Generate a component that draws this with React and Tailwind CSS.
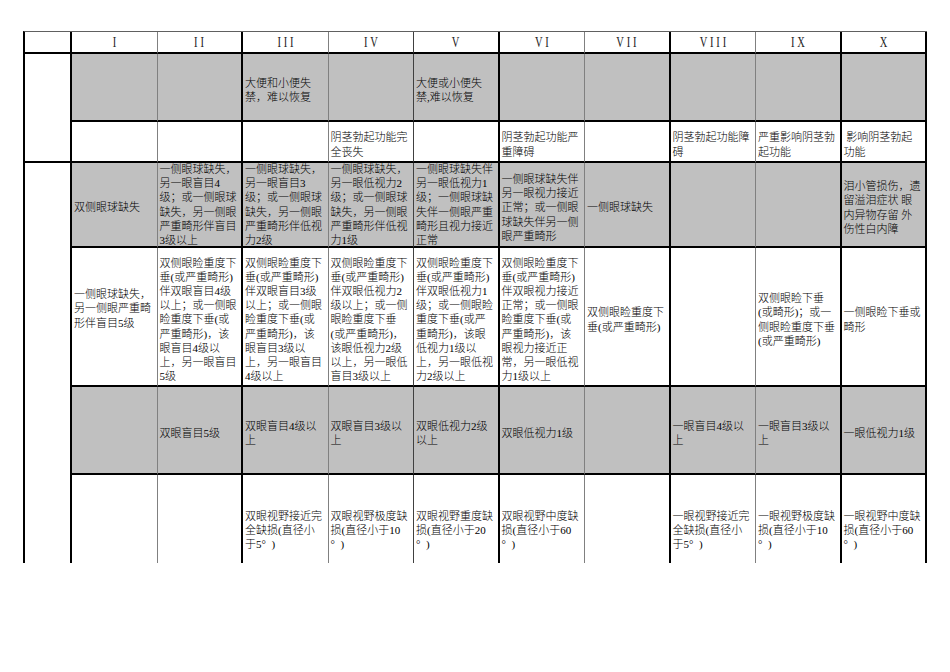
import React from "react";

const colBorder = [
  "border-r-2 border-r-black",
  "border-r border-r-[#808080]",
  "border-r-2 border-r-black",
  "border-r border-r-[#808080]",
  "border-r border-r-[#404040]",
  "border-r-2 border-r-black",
  "border-r border-r-[#808080]",
  "border-r-2 border-r-black",
  "border-r border-r-[#808080]",
  "border-r-2 border-r-black",
  "border-r-2 border-r-black",
];

const headers = ["I", "II", "III", "IV", "V", "VI", "VII", "VIII", "IX", "X"];

const deg = "°\u00a0\u00a0)";

const rows = [
  {
    gray: true,
    cells: [
      null,
      null,
      ["大便和小便失", "禁，难以恢复"],
      null,
      ["大便或小便失", "禁,难以恢复"],
      null,
      null,
      null,
      null,
      null,
    ],
  },
  {
    gray: false,
    cells: [
      null,
      null,
      null,
      ["阴茎勃起功能完", "全丧失"],
      null,
      ["阴茎勃起功能严", "重障碍"],
      null,
      ["阴茎勃起功能障", "碍"],
      ["严重影响阴茎勃", "起功能"],
      ["\u00a0影响阴茎勃起", "功能"],
    ],
  },
  {
    gray: true,
    cells: [
      ["双侧眼球缺失"],
      ["一侧眼球缺失，", "另一眼盲目4", "级；或一侧眼球", "缺失，另一侧眼", "严重畸形伴盲目", "3级以上"],
      ["一侧眼球缺失，", "另一眼盲目3", "级；或一侧眼球", "缺失，另一侧眼", "严重畸形伴低视", "力2级"],
      ["一侧眼球缺失，", "另一眼低视力2", "级；或一侧眼球", "缺失，另一侧眼", "严重畸形伴低视", "力1级"],
      ["一侧眼球缺失伴", "另一眼低视力1", "级；一侧眼球缺", "失伴一侧眼严重", "畸形且视力接近", "正常"],
      ["一侧眼球缺失伴", "另一眼视力接近", "正常；或一侧眼", "球缺失伴另一侧", "眼严重畸形"],
      ["一侧眼球缺失"],
      null,
      null,
      ["泪小管损伤，遗", "留溢泪症状 眼", "内异物存留 外", "伤性白内障"],
    ],
  },
  {
    gray: false,
    cells: [
      ["一侧眼球缺失，", "另一侧眼严重畸", "形伴盲目5级"],
      ["双侧眼睑重度下", "垂(或严重畸形)", "伴双眼盲目4级", "以上；或一侧眼", "睑重度下垂(或", "严重畸形)，该", "眼盲目4级以", "上，另一眼盲目", "5级"],
      ["双侧眼睑重度下", "垂(或严重畸形)", "伴双眼盲目3级", "以上；或一侧眼", "睑重度下垂(或", "严重畸形)，该", "眼盲目3级以", "上，另一眼盲目", "4级以上"],
      ["双侧眼睑重度下", "垂(或严重畸形)", "伴双眼低视力2", "级以上；或一侧", "眼睑重度下垂", "(或严重畸形)，", "该眼低视力2级", "以上，另一眼低", "盲目3级以上"],
      ["双侧眼睑重度下", "垂(或严重畸形)", "伴双眼低视力1", "级；或一侧眼睑", "重度下垂(或严", "重畸形)，该眼", "低视力1级以", "上，另一眼低视", "力2级以上"],
      ["双侧眼睑重度下", "垂(或严重畸形)", "伴双眼视力接近", "正常；或一侧眼", "睑重度下垂(或", "严重畸形)，该", "眼视力接近正", "常，另一眼低视", "力1级以上"],
      ["双侧眼睑重度下", "垂(或严重畸形)"],
      null,
      ["双侧眼睑下垂", "(或畸形)；或一", "侧眼睑重度下垂", "(或严重畸形)"],
      ["一侧眼睑下垂或", "畸形"],
    ],
  },
  {
    gray: true,
    cells: [
      null,
      ["双眼盲目5级"],
      ["双眼盲目4级以", "上"],
      ["双眼盲目3级以", "上"],
      ["双眼低视力2级", "以上"],
      ["双眼低视力1级"],
      null,
      ["一眼盲目4级以", "上"],
      ["一眼盲目3级以", "上"],
      ["一眼低视力1级"],
    ],
  },
  {
    gray: false,
    cells: [
      null,
      null,
      ["双眼视野接近完", "全缺损(直径小", "于5" + deg],
      ["双眼视野极度缺", "损(直径小于10", deg],
      ["双眼视野重度缺", "损(直径小于20", deg],
      ["双眼视野中度缺", "损(直径小于60", deg],
      null,
      ["一眼视野接近完", "全缺损(直径小", "于5" + deg],
      ["一眼视野极度缺", "损(直径小于10", deg],
      ["一眼视野中度缺", "损(直径小于60", deg],
    ],
  },
];

function Cell({ lines, gray, col, extra = "" }) {
  return (
    <div
      className={`flex items-center pl-[2px] overflow-hidden border-b-2 border-b-black ${colBorder[col]} ${
        gray ? "bg-[#c0c0c0]" : "bg-white"
      } ${extra}`}
    >
      {lines && (
        <div className="whitespace-nowrap leading-[14.2px]">
          {lines.map((l, i) => (
            <div key={i}>{l}</div>
          ))}
        </div>
      )}
    </div>
  );
}

export default function App() {
  const cells = [];
  cells.push(
    <div key="h0" className={`bg-white border-b-2 border-b-black ${colBorder[0]}`} />
  );
  headers.forEach((h, i) => {
    cells.push(
      <div
        key={"h" + (i + 1)}
        className={`flex items-center justify-center bg-white border-b-2 border-b-black ${colBorder[i + 1]}`}
      >
        <span className="inline-block font-['Liberation_Serif',serif] text-[15px] leading-none tracking-[4px] pl-[4px] scale-x-70 text-[#222]">
          {h}
        </span>
      </div>
    );
  });

  rows.forEach((r, ri) => {
    if (ri === 0) {
      cells.push(
        <div key="l1" className={`row-span-2 bg-white border-b-2 border-b-black ${colBorder[0]}`} />
      );
    }
    if (ri === 2) {
      cells.push(
        <div key="l2" className={`row-span-4 bg-white border-b-2 border-b-black ${colBorder[0]}`} />
      );
    }
    r.cells.forEach((c, ci) => {
      let extra = "";
      if (ri === 3 && ci === 0) extra = "pb-[16px]";
      else if (!(ri === 2 && c && c.length >= 6)) extra = "pt-[6px]";
      cells.push(
        <Cell key={`r${ri}c${ci}`} lines={c} gray={r.gray} col={ci + 1} extra={extra} />
      );
    });
  });

  return (
    <div className="w-[950px] h-[672px] bg-white font-['Liberation_Serif','Noto_Sans_CJK_SC',serif] text-[11px] font-light text-black">
      <div className="pl-[23px] pt-[31px]">
        <div className="w-fit h-[532px] overflow-hidden border-l-2 border-l-black border-t border-t-[#606060]">
          <div className="grid grid-cols-[47px_repeat(10,85.5px)] grid-rows-[22px_68px_41px_85px_139px_88px_106px]">
            {cells}
          </div>
        </div>
      </div>
    </div>
  );
}
